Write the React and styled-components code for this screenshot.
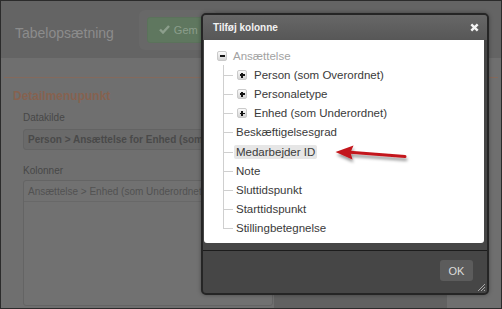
import React from "react";
import styled, { createGlobalStyle } from "styled-components";

const GlobalStyle = createGlobalStyle`
  html, body {
    margin: 0;
    padding: 0;
    background: #6e6e6e;
  }
  body {
    font-family: "Liberation Sans", Arial, sans-serif;
  }
  * {
    box-sizing: border-box;
  }
`;

const Screen = styled.div`
  position: relative;
  width: 502px;
  height: 309px;
  border: 1px solid #2b2b2b;
  background: #6f6f6f;
  overflow: hidden;
`;

const TopBar = styled.header`
  height: 57px;
  display: flex;
  align-items: center;
  gap: 25px;
  padding-left: 14px;
  background: #646464;
`;

const PageTitle = styled.h1`
  margin: 6px 0 0;
  font-size: 14px;
  font-weight: normal;
  color: #8c8c8c;
`;

const ToolGroup = styled.div`
  display: flex;
  padding: 7px 8px;
  background: #686868;
  border-radius: 6px;
`;

const GemButton = styled.button`
  display: flex;
  align-items: center;
  gap: 4px;
  height: 26px;
  width: 62px;
  padding: 0 0 0 11px;
  border: 1px solid #5b725b;
  border-radius: 3px;
  background: #5f775f;
  color: #8c9e8c;
  font-family: inherit;
  font-size: 11px;
`;

const Section = styled.section`
  margin: 19px 3px 0;
  padding: 11px 0 0 9px;
  border-top: 1px solid #84695b;
`;

const SectionTitle = styled.h2`
  margin: 0;
  font-size: 12px;
  line-height: 14px;
  color: #86624f;
`;

const Fields = styled.div`
  padding: 9px 0 0 10px;
`;

const Label = styled.div`
  font-size: 10px;
  line-height: 12px;
  color: #474747;
  margin-top: ${(p) => p.$gap || 0}px;
`;

const Input = styled.div`
  width: 250px;
  height: 21px;
  margin-top: 5px;
  padding-left: 4px;
  display: flex;
  align-items: center;
  border: 1px solid #636363;
  border-radius: 3px;
  background: #6a6a6a;
  font-size: 10px;
  font-weight: bold;
  color: #494949;
  white-space: nowrap;
  overflow: hidden;
`;

const ColumnsRow = styled.div`
  display: flex;
  gap: 1px;
  margin-top: 3px;
`;

const ColumnList = styled.div`
  width: 250px;
  height: 126px;
  border: 1px solid #646464;
  border-radius: 3px;
  background: #717171;
`;

const ColumnItem = styled.div`
  height: 21px;
  padding-left: 4px;
  display: flex;
  align-items: center;
  border-bottom: 1px solid #686868;
  font-size: 10px;
  color: #525252;
  white-space: nowrap;
`;

const PreviewPane = styled.div`
  width: 173px;
  height: 130px;
  background: #616161;
`;

const Dialog = styled.div`
  position: absolute;
  left: 200px;
  top: 12px;
  width: 288px;
  height: 282px;
  display: flex;
  flex-direction: column;
  border: 2px solid #252525;
  border-radius: 5px;
  background: #464646;
  box-shadow: 0 0 4px rgba(0, 0, 0, 0.35);
`;

const DialogHeader = styled.div`
  height: 25px;
  display: flex;
  align-items: center;
  justify-content: space-between;
  padding: 0 8px 0 10px;
  border-radius: 3px 3px 0 0;
  background: linear-gradient(#676767, #575757);
  color: #f2f2f2;
  font-size: 10px;
  font-weight: bold;
`;

const DialogBody = styled.div`
  height: 203px;
  margin: 0 3px 0 1px;
  padding: 6px 0 0 13px;
  border-radius: 0 0 3px 3px;
  background: #fff;
`;

const DialogFooter = styled.div`
  position: relative;
  flex: 1;
  margin-top: 7px;
  padding: 9px 14px 0 0;
  display: flex;
  justify-content: flex-end;
  align-items: flex-start;
  border-top: 1px solid #1c1c1c;
`;

const OkButton = styled.button`
  width: 33px;
  height: 21px;
  padding: 0;
  border: none;
  border-radius: 3px;
  background: #5c5c5c;
  color: #dcdcdc;
  font-family: inherit;
  font-size: 11px;
`;

const Grip = styled.svg`
  position: absolute;
  right: 2px;
  bottom: 2px;
`;

const TreeRow = styled.div`
  position: relative;
  height: 19.2px;
  display: flex;
  align-items: center;
  font-size: 11.5px;
  color: ${(p) => (p.$muted ? "#a2a2a2" : "#3a3a3a")};
  white-space: nowrap;
`;

const Branch = styled.div`
  margin-left: 6px;
`;

const BranchRow = styled(TreeRow)`
  padding-left: ${(p) => (p.$toggle ? 14 : 11)}px;
  &::before {
    content: "";
    position: absolute;
    left: 0;
    top: 50%;
    width: 10px;
    border-top: 1px solid #cfcfcf;
  }
  &::after {
    content: "";
    position: absolute;
    left: 0;
    top: 0;
    height: 100%;
    border-left: 1px solid #cfcfcf;
  }
  &:last-child::after {
    height: 50%;
  }
`;

const Toggle = styled.span`
  position: relative;
  width: 10px;
  height: 10px;
  margin-right: ${(p) => p.$space}px;
  border: 1px solid #cacaca;
  border-radius: 2px;
  background: linear-gradient(#fbfbfb, #d3d3d3);
  &::before {
    content: "";
    position: absolute;
    left: 1.5px;
    top: 3.5px;
    width: 5px;
    height: 1.6px;
    background: #151515;
  }
  &::after {
    content: "";
    display: ${(p) => (p.$open ? "none" : "block")};
    position: absolute;
    left: 3.2px;
    top: 1.8px;
    width: 1.6px;
    height: 5px;
    background: #151515;
  }
`;

const ItemLabel = styled.span`
  padding: 1px 2px;
  border-radius: 2px;
  background: ${(p) => (p.$selected ? "#e6e6e6" : "transparent")};
`;

const Pointer = styled.svg`
  position: absolute;
  left: 329px;
  top: 139px;
  overflow: visible;
`;

const branches = ["Person (som Overordnet)", "Personaletype", "Enhed (som Underordnet)"];
const leaves = [
  "Beskæftigelsesgrad",
  "Medarbejder ID",
  "Note",
  "Sluttidspunkt",
  "Starttidspunkt",
  "Stillingbetegnelse",
];

export default function App() {
  return (
    <>
      <GlobalStyle />
      <Screen>
        <TopBar>
          <PageTitle>Tabelopsætning</PageTitle>
          <ToolGroup>
            <GemButton>
              <svg width="11" height="9" viewBox="0 0 11 9">
                <path d="M1 4.5 L4 7.5 L10 1" fill="none" stroke="#8c9e8c" strokeWidth="2.4" />
              </svg>
              Gem
            </GemButton>
          </ToolGroup>
        </TopBar>

        <Section>
          <SectionTitle>Detailmenupunkt</SectionTitle>
          <Fields>
            <Label>Datakilde</Label>
            <Input>Person &gt; Ansættelse for Enhed (som Overordnet)</Input>
            <Label $gap={15}>Kolonner</Label>
            <ColumnsRow>
              <ColumnList>
                <ColumnItem>Ansættelse &gt; Enhed (som Underordnet)</ColumnItem>
              </ColumnList>
              <PreviewPane />
            </ColumnsRow>
          </Fields>
        </Section>

        <Dialog>
          <DialogHeader>
            Tilføj kolonne
            <svg width="9" height="9" viewBox="0 0 9 9">
              <path d="M1.3 1.3 L7.7 7.7 M7.7 1.3 L1.3 7.7" stroke="#f4f4f4" strokeWidth="2.4" />
            </svg>
          </DialogHeader>
          <DialogBody>
            <TreeRow $muted>
              <Toggle $open $space={6} />
              Ansættelse
            </TreeRow>
            <Branch>
              {branches.map((b) => (
                <BranchRow key={b} $toggle>
                  <Toggle $space={7} />
                  {b}
                </BranchRow>
              ))}
              {leaves.map((l) => (
                <BranchRow key={l}>
                  <ItemLabel $selected={l === "Medarbejder ID"}>{l}</ItemLabel>
                </BranchRow>
              ))}
            </Branch>
          </DialogBody>
          <DialogFooter>
            <OkButton>OK</OkButton>
            <Grip width="8" height="8" viewBox="0 0 8 8">
              <path d="M1 8 L8 1 M4 8 L8 4 M7 8 L8 7" stroke="#a8a8a8" strokeWidth="1" />
            </Grip>
          </DialogFooter>
        </Dialog>

        <Pointer width="85" height="30" viewBox="0 0 85 30">
          <defs>
            <filter id="shade" x="-20%" y="-50%" width="140%" height="220%">
              <feDropShadow dx="1" dy="3" stdDeviation="1.6" floodColor="#000" floodOpacity="0.4" />
            </filter>
          </defs>
          <g filter="url(#shade)">
            <path d="M20 12.2 L75 16.6" stroke="#c3171c" strokeWidth="3" strokeLinecap="round" />
            <path d="M5.5 12 L23.5 5.5 L20.5 12.4 L22.5 19.5 Z" fill="#c3171c" />
          </g>
        </Pointer>
      </Screen>
    </>
  );
}
